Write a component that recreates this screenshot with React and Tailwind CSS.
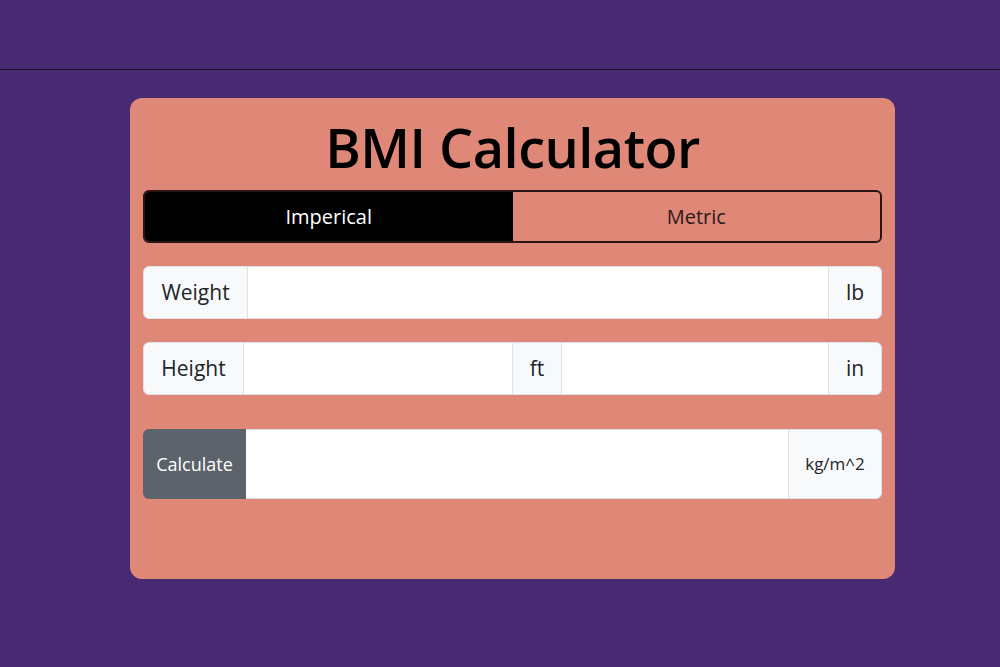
import React, { useState } from "react";

const font = { fontFamily: '"Open Sans", "Noto Sans", sans-serif' };

function Addon({ children, className = "" }) {
  return (
    <div
      className={
        "flex shrink-0 items-center justify-center bg-[#f8f9fa] border border-[#dee2e6] text-[#212529] " +
        className
      }
    >
      {children}
    </div>
  );
}

export default function App() {
  const [mode, setMode] = useState("imperial");
  const [weight, setWeight] = useState("");
  const [ft, setFt] = useState("");
  const [inch, setInch] = useState("");
  const [bmi, setBmi] = useState("");

  const calculate = () => {
    const lb = parseFloat(weight);
    const h = (parseFloat(ft) || 0) * 12 + (parseFloat(inch) || 0);
    if (!lb || !h) return setBmi("");
    setBmi(((703 * lb) / (h * h)).toFixed(1));
  };

  return (
    <div className="min-h-[667px] bg-[#482a73]" style={font}>
      <div className="h-[70px] border-b border-[#1b1030]" />
      <div className="flex justify-center pt-[28px]">
        <div className="w-[765px] h-[481px] bg-[#e08878] rounded-[12px] px-[13px] ml-[25px]">
          <h1 className="text-center text-[54px] pt-[6px] leading-[86px] font-semibold text-black tracking-[-0.5px]">
            BMI Calculator
          </h1>
          <div className="flex h-[53px] border-2 border-[#2a1414] rounded-[6px] overflow-hidden text-[20px]">
            <button
              onClick={() => setMode("imperial")}
              className={
                "flex-1 " +
                (mode === "imperial" ? "bg-black text-white" : "text-[#2a1a1a]")
              }
            >
              Imperical
            </button>
            <button
              onClick={() => setMode("metric")}
              className={
                "flex-1 " +
                (mode === "metric" ? "bg-black text-white" : "text-[#2a1a1a]")
              }
            >
              Metric
            </button>
          </div>

          <div className="flex h-[53px] mt-[23px] text-[21px]">
            <Addon className="w-[105px] rounded-l-[6px]">Weight</Addon>
            <input
              className="flex-1 min-w-0 bg-white border-y border-[#dee2e6] outline-none px-3"
              value={weight}
              onChange={(e) => setWeight(e.target.value)}
            />
            <Addon className="w-[54px] rounded-r-[6px]">lb</Addon>
          </div>

          <div className="flex h-[53px] mt-[23px] text-[21px]">
            <Addon className="w-[101px] rounded-l-[6px]">Height</Addon>
            <input
              className="w-[268px] min-w-0 shrink-0 bg-white border-y border-[#dee2e6] outline-none px-3"
              value={ft}
              onChange={(e) => setFt(e.target.value)}
            />
            <Addon className="w-[50px]">ft</Addon>
            <input
              className="flex-1 min-w-0 bg-white border-y border-[#dee2e6] outline-none px-3"
              value={inch}
              onChange={(e) => setInch(e.target.value)}
            />
            <Addon className="w-[54px] rounded-r-[6px]">in</Addon>
          </div>

          <div className="flex h-[70px] mt-[34px]">
            <button
              onClick={calculate}
              className="w-[103px] shrink-0 bg-[#5c636a] text-white text-[18px] rounded-l-[6px]"
            >
              Calculate
            </button>
            <input
              readOnly
              className="flex-1 min-w-0 bg-white border-y border-[#dee2e6] outline-none px-3 text-[17px]"
              value={bmi}
            />
            <Addon className="w-[94px] rounded-r-[6px] text-[17px]">kg/m^2</Addon>
          </div>
        </div>
      </div>
    </div>
  );
}
